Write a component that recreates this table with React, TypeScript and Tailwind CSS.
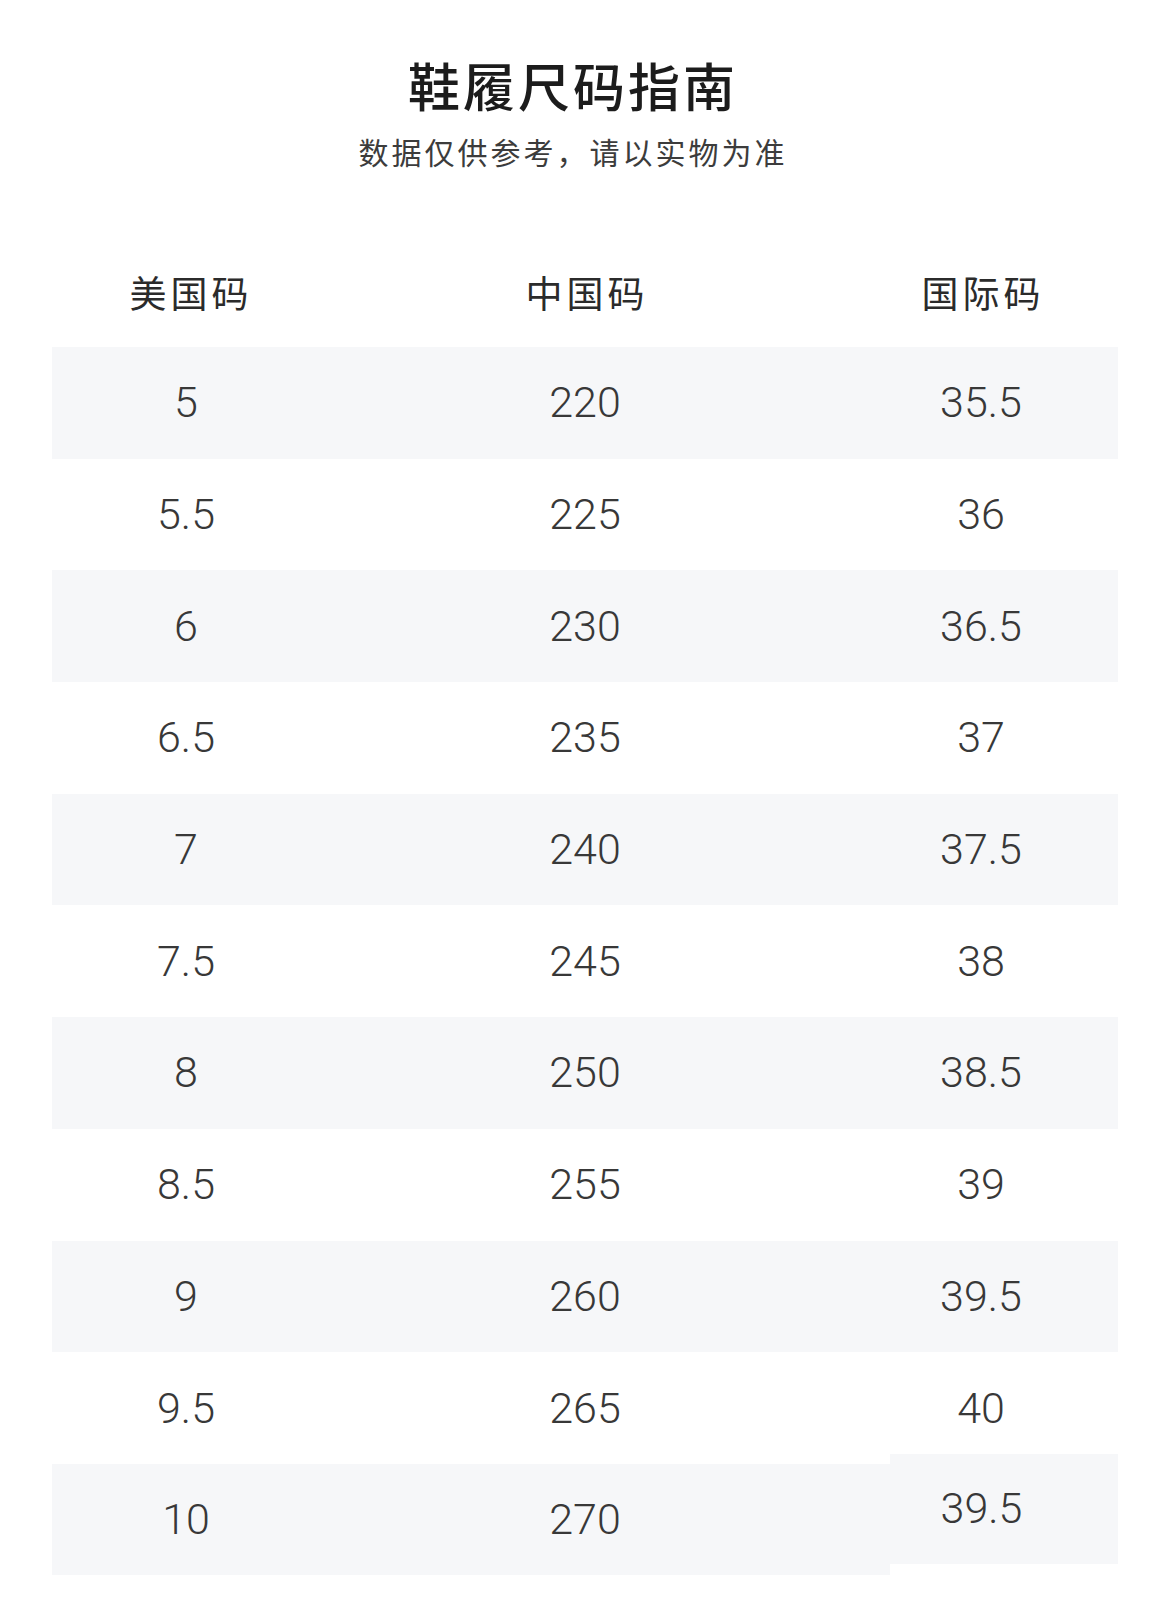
import React from 'react'

const rows: [string, string, string][] = [
  ['5', '220', '35.5'],
  ['5.5', '225', '36'],
  ['6', '230', '36.5'],
  ['6.5', '235', '37'],
  ['7', '240', '37.5'],
  ['7.5', '245', '38'],
  ['8', '250', '38.5'],
  ['8.5', '255', '39'],
  ['9', '260', '39.5'],
  ['9.5', '265', '40'],
]

const cjk = "font-['Noto_Sans_CJK_SC',sans-serif]"
const num = "font-['Roboto','Liberation_Sans',sans-serif] font-light text-[43px] leading-none text-[#383838]"

export default function App() {
  return (
    <div className="min-h-[1613px] w-[1170px] bg-white pt-[59px]">
      {/* heading */}
      <div className={`flex flex-col items-center pr-[24px] ${cjk}`}>
        <h1 className="text-[52px] leading-none font-medium tracking-[3px] text-[#1c1c1c]">鞋履尺码指南</h1>
        <p className="mt-[25px] text-[30px] leading-none tracking-[3px] text-[#3c3c3c]">数据仅供参考，请以实物为准</p>
      </div>

      {/* column titles */}
      <div className={`mt-[108px] mx-[52px] grid grid-cols-[repeat(3,260px)] gap-x-[136px] justify-center ${cjk}`}>
        {['美国码', '中国码', '国际码'].map((h) => (
          <div key={h} className="text-center text-[37px] leading-none tracking-[4px] pl-[4px] text-[#2b2b2b]">
            {h}
          </div>
        ))}
      </div>

      {/* size rows */}
      <div className="mt-[36px] mx-[52px] flex flex-col">
        {rows.map((r, i) => (
          <div
            key={r[0]}
            className={`h-[111.7px] grid grid-cols-[repeat(3,260px)] gap-x-[136px] justify-center items-center ${
              i % 2 === 0 ? 'bg-[#f6f7f9]' : 'bg-white'
            }`}
          >
            {r.map((c, j) => (
              <div key={j} className={`text-center ${num} ${j === 0 ? 'pr-[6px]' : ''}`}>
                {c}
              </div>
            ))}
          </div>
        ))}

        {/* last row, right cell sits a little higher */}
        <div className="h-[111px] flex">
          <div className="w-[838px] bg-[#f6f7f9] grid grid-cols-[268px_530px] items-center">
            <div className={`text-center ${num}`}>10</div>
            <div className={`text-center ${num}`}>270</div>
          </div>
          <div className="flex-1 h-[110px] -mt-[10px] bg-[#f6f7f9] flex items-center justify-center pr-[45px]">
            <div className={num}>39.5</div>
          </div>
        </div>
      </div>
    </div>
  )
}
